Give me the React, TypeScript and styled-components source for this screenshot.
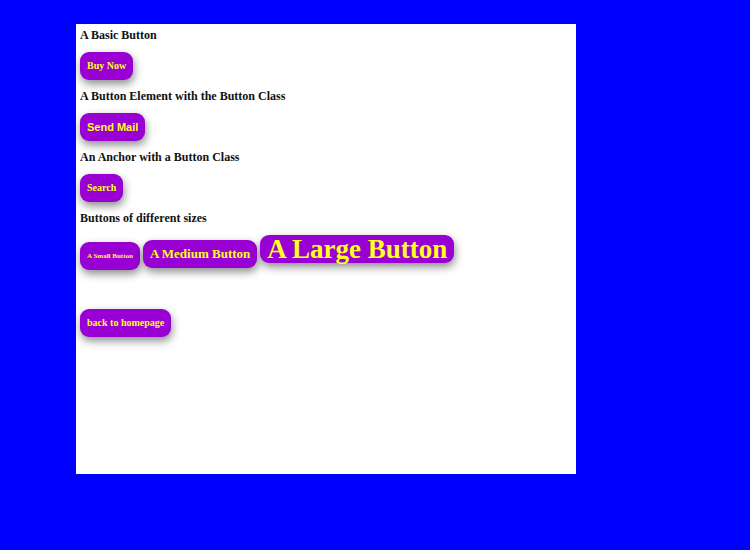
import React from "react";
import styled, { createGlobalStyle, css } from "styled-components";

const GlobalStyle = createGlobalStyle`
  *, *::before, *::after { box-sizing: border-box; }
  body { margin: 0; background: #0000ff; font-family: "Liberation Serif", "Times New Roman", serif; }
`;

const Page = styled.main`
  width: calc(100% - 250px);
  max-width: 500px;
  min-height: 450px;
  margin: 24px 76px;
  padding: 4px;
  background: #ffffff;
`;

const Section = styled.section`
  display: flex;
  flex-direction: column;
  align-items: flex-start;
  gap: 10px;
  padding-bottom: 9px;
`;

const Heading = styled.h2`
  margin: 0;
  font-size: 12px;
  line-height: 14px;
  font-weight: 700;
  color: #111111;
`;

const sizes = { tiny: 7, small: 10, medium: 13, large: 27 };

const buttonStyle = css<{ $size?: keyof typeof sizes }>`
  display: inline-flex;
  align-items: center;
  justify-content: center;
  height: 28px;
  padding: 0 7px;
  border: 0;
  border-radius: 9px;
  background: #9900d3;
  color: #ffff22;
  font-family: inherit;
  font-size: ${({ $size = "small" }) => sizes[$size]}px;
  font-weight: 700;
  line-height: 28px;
  white-space: nowrap;
  text-decoration: none;
  box-shadow: 1px 4px 8px rgba(0, 0, 0, 0.45);
  cursor: pointer;
`;

const Button = styled.button<{ $size?: keyof typeof sizes }>`
  ${buttonStyle}
`;

const MailButton = styled(Button)`
  font-family: "Liberation Sans", Arial, sans-serif;
  font-size: 11px;
`;

const LinkButton = styled.a<{ $size?: keyof typeof sizes }>`
  ${buttonStyle}
`;

const ButtonRow = styled.div`
  display: flex;
  align-items: baseline;
  gap: 3px;
`;

const Footer = styled.footer`
  display: flex;
  margin-top: 30px;
`;

export default function App() {
  return (
    <>
      <GlobalStyle />
      <Page>
        <Section>
          <Heading>A Basic Button</Heading>
          <LinkButton href="#buy">Buy Now</LinkButton>
        </Section>
        <Section>
          <Heading>A Button Element with the Button Class</Heading>
          <MailButton type="button">Send Mail</MailButton>
        </Section>
        <Section>
          <Heading>An Anchor with a Button Class</Heading>
          <LinkButton href="#search">Search</LinkButton>
        </Section>
        <Section>
          <Heading>Buttons of different sizes</Heading>
          <ButtonRow>
            <Button type="button" $size="tiny">A Small Button</Button>
            <Button type="button" $size="medium">A Medium Button</Button>
            <Button type="button" $size="large">A Large Button</Button>
          </ButtonRow>
        </Section>
        <Footer>
          <LinkButton href="#home">back to homepage</LinkButton>
        </Footer>
      </Page>
    </>
  );
}
